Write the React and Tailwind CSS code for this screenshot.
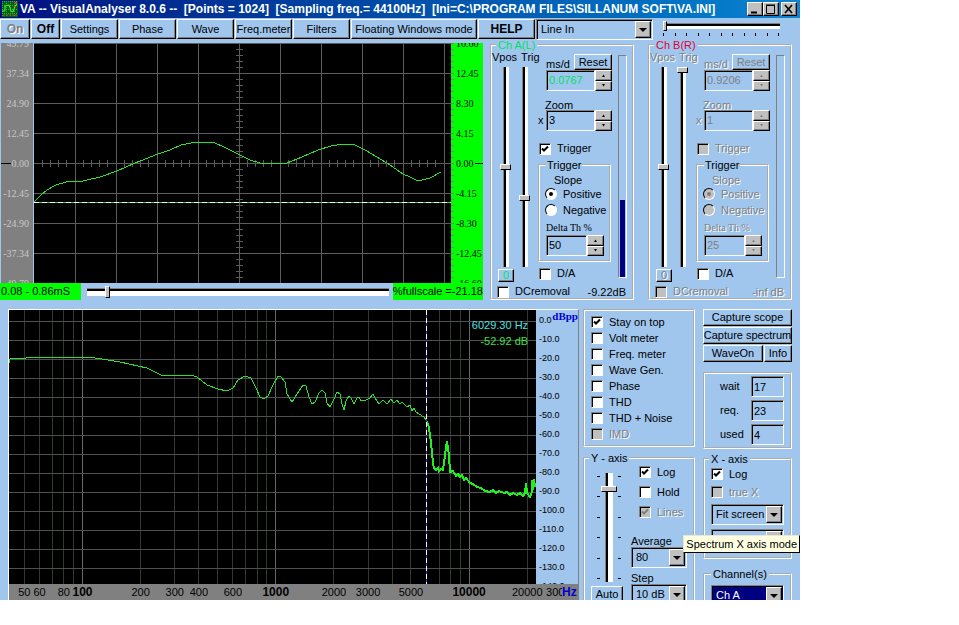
import React, { useState } from 'react';
import clsx from 'clsx';

const raised = 'border border-t-white border-l-white border-r-black border-b-black shadow-[inset_-1px_-1px_0_#808080]';
const sunken = 'border border-t-[#808080] border-l-[#808080] border-r-white border-b-white shadow-[inset_1px_1px_0_#000]';
const etched = 'min-w-0 border-2 [border-style:groove] border-white';
const dimmed = 'text-[#808080] [text-shadow:1px_1px_0_#fff]';

const Button = ({ className, children, ...props }) => (
  <button
    type="button"
    className={clsx('flex items-center justify-center whitespace-nowrap', raised, className)}
    {...props}
  >
    {children}
  </button>
);

const Check = ({ label, defaultChecked, disabled, className }) => (
  <label className={clsx('flex items-center gap-1.5 whitespace-nowrap', disabled && dimmed, className)}>
    <span className="grid size-3 shrink-0">
      <input
        type="checkbox"
        defaultChecked={defaultChecked}
        disabled={disabled}
        className={clsx('peer col-start-1 row-start-1 size-3 appearance-none', sunken, disabled ? 'bg-[#c0c0c0]' : 'bg-white')}
      />
      <svg viewBox="0 0 12 12" className="pointer-events-none invisible col-start-1 row-start-1 size-3 peer-checked:visible">
        <path d="M3 5.5 L5 7.5 L9 3.5" fill="none" stroke={disabled ? '#808080' : '#000'} strokeWidth="2" />
      </svg>
    </span>
    {label}
  </label>
);

const Radio = ({ label, name, defaultChecked, disabled }) => (
  <label className={clsx('flex h-4 items-center gap-1.5', disabled && dimmed)}>
    <span className="grid size-3 place-items-center">
      <input
        type="radio"
        name={name}
        defaultChecked={defaultChecked}
        disabled={disabled}
        className={clsx(
          'peer col-start-1 row-start-1 size-3 appearance-none rounded-full border border-t-black border-l-black border-r-white border-b-white',
          disabled ? 'bg-[#c0c0c0]' : 'bg-white'
        )}
      />
      <span className={clsx('invisible col-start-1 row-start-1 size-1 rounded-full peer-checked:visible', disabled ? 'bg-[#808080]' : 'bg-black')} />
    </span>
    {label}
  </label>
);

const Spinner = ({ label, value, disabled, className }) => (
  <div className="flex h-[21px]">
    <input
      aria-label={label}
      defaultValue={value}
      disabled={disabled}
      className={clsx('min-w-0 flex-1 bg-transparent pl-0.5', sunken, disabled ? 'text-[#808080]' : className)}
    />
    <div className="flex w-[17px] flex-col">
      {['up', 'down'].map((dir) => (
        <Button key={dir} aria-label={`${label} ${dir}`} disabled={disabled} className="flex-1 bg-[#c0c0c0]">
          <svg viewBox="0 0 5 3" className="h-[3px] w-[5px]">
            <path d={dir === 'up' ? 'M1 3 L2.5 0.5 L4 3Z' : 'M1 0 L2.5 2.5 L4 0Z'} fill={disabled ? '#808080' : '#000'} />
          </svg>
        </Button>
      ))}
    </div>
  </div>
);

const Select = ({ id, options, disabled, highlighted, className }) => (
  <div className={clsx('grid h-[21px]', className)}>
    <select
      id={id}
      aria-label={id}
      disabled={disabled}
      className={clsx(
        'col-start-1 row-start-1 min-w-0 appearance-none pl-1',
        sunken,
        highlighted ? 'bg-[#000080] text-white' : 'bg-transparent',
        disabled && 'text-[#808080]'
      )}
    >
      {options.map((o) => (
        <option key={o}>{o}</option>
      ))}
    </select>
    <span className={clsx('pointer-events-none col-start-1 row-start-1 my-0.5 mr-0.5 flex w-4 items-center justify-center justify-self-end bg-[#c0c0c0]', raised)}>
      <svg viewBox="0 0 8 4" className="h-1 w-2">
        <path d="M0 0 H8 L4 4Z" fill={disabled ? '#808080' : '#000'} />
      </svg>
    </span>
  </div>
);

const VSlider = ({ label, value, disabled }) => (
  <input
    type="range"
    aria-label={label}
    defaultValue={value}
    disabled={disabled}
    className="h-[200px] w-[11px] appearance-none bg-[linear-gradient(to_right,#808080_1px,#000_1px_3px,#fff_3px)] bg-[length:6px_100%] bg-center bg-no-repeat [writing-mode:vertical-lr] [&::-webkit-slider-thumb]:h-[6px] [&::-webkit-slider-thumb]:w-[11px] [&::-webkit-slider-thumb]:appearance-none [&::-webkit-slider-thumb]:border [&::-webkit-slider-thumb]:border-t-white [&::-webkit-slider-thumb]:border-r-black [&::-webkit-slider-thumb]:border-b-black [&::-webkit-slider-thumb]:border-l-white [&::-webkit-slider-thumb]:bg-[#c0c0c0]"
  />
);

const Channel = ({ id, title, titleClass, timeDiv, zoom, delta, trig, level, levelText, disabled }) => (
  <fieldset className={clsx('w-36 shrink-0', etched)}>
    <legend className={clsx('ml-1 px-0.5 leading-3', titleClass)}>{title}</legend>
    <div className="flex gap-1.5">
      <div className="flex w-10 shrink-0 flex-col">
        <div className={clsx('flex gap-1 leading-3', disabled && dimmed)}>
          <span>Vpos</span>
          <span>Trig</span>
        </div>
        <div className="mt-1 flex gap-2 pl-2">
          <VSlider label={`${id} vpos`} value={50} disabled={disabled} />
          <VSlider label={`${id} trig`} value={trig} disabled={disabled} />
        </div>
        <Button disabled={disabled} className={clsx('mt-0.5 ml-1.5 h-[13px] w-4', disabled ? dimmed : 'text-[#00e060]')}>0</Button>
      </div>

      <div className="flex w-[74px] shrink-0 flex-col pt-[3px]">
        <div className={clsx('flex h-4 items-end justify-between pl-2 leading-3', disabled && dimmed)}>
          <span>ms/d</span>
          <Button disabled={disabled} className="h-4 w-[38px] self-start">Reset</Button>
        </div>
        <div className="pl-2">
          <Spinner label={`${id} ms/d`} value={timeDiv} disabled={disabled} className="text-[#00e060]" />
        </div>
        <div className={clsx('mt-2 h-[11px] pl-[7px] leading-3', disabled && dimmed)}>Zoom</div>
        <div className="flex items-center">
          <span className={clsx('w-2', disabled && dimmed)}>x</span>
          <div className="min-w-0 flex-1">
            <Spinner label={`${id} zoom`} value={zoom} disabled={disabled} />
          </div>
        </div>
        <Check label="Trigger" defaultChecked={!disabled} disabled={disabled} className="mt-[11px] h-[13px] pl-px" />
        <fieldset className={clsx('mt-1 w-[73px] pb-1', etched)}>
          <legend className="ml-1.5 px-px leading-3">Trigger</legend>
          <div className={clsx('mt-[3px] pl-3.5 leading-3', disabled && dimmed)}>Slope</div>
          <div className="pl-[5px]">
            <Radio label="Positive" name={`${id}-slope`} defaultChecked disabled={disabled} />
            <Radio label="Negative" name={`${id}-slope`} disabled={disabled} />
          </div>
          <div className={clsx("mt-1 pl-1.5 font-['Liberation_Serif',serif] text-[10px] leading-3", disabled && dimmed)}>Delta Th %</div>
          <div className="mt-px w-16 pl-1.5">
            <Spinner label={`${id} delta`} value={delta} disabled={disabled} />
          </div>
        </fieldset>
        <Check label="D/A" className="mt-[5px] h-[13px] pl-px" />
      </div>

      <div className="mt-1 flex h-[223px] w-[9px] flex-col justify-end border border-t-[#808080] border-l-[#808080] border-r-white border-b-white px-px">
        <div className="bg-[#000080]" style={{ height: `${level}%` }} />
      </div>
    </div>
    <div className="flex items-center justify-between pt-[3px] pr-1.5 pl-[5px]">
      <Check label="DCremoval" disabled={disabled} className="h-[13px]" />
      <span className={clsx('leading-3', disabled && dimmed)}>{levelText}</span>
    </div>
  </fieldset>
);

// scope display, 417 x 240 units
const scopePath =
  'M0 159 L6 153 L13 147 L22 142 L32 139 L49 138 L66 134 L83 128 L101 120 L124 111 L136 107 L147 102 L157 100 L168 99 L181 100 L190 104 L206 112 L216 117 L226 120 L239 121 L253 120 L268 114 L284 107 L297 103 L309 101 L321 102 L331 107 L353 120 L369 131 L376 134 L384 138 L396 135 L407 129';

const ScopeLabels = ({ values, side }) => (
  <div className="flex h-60 flex-col justify-between overflow-hidden font-['Liberation_Serif',serif] text-[10px]">
    {values.map((v) => (
      <div key={v} className={clsx('flex h-0 items-center gap-px', side === 'left' ? 'justify-end pr-1' : 'pl-[5px]')}>
        {side === 'left' && v === '0.00' && <span className="h-px flex-1 bg-black" />}
        <span>{v}</span>
        {side === 'right' && v === '0.00' && <span className="h-px flex-1 bg-black" />}
      </div>
    ))}
  </div>
);

const Scope = () => (
  <div className="flex min-w-0 flex-1 flex-col pt-1">
    <div className="flex">
      <div className="ml-px w-8 bg-[#808080] text-[#c8c8c8]">
        <ScopeLabels side="left" values={['49.79', '37.34', '24.90', '12.45', '0.00', '-12.45', '-24.90', '-37.34', '-49.79']} />
      </div>
      <svg className="ml-px h-60 min-w-0 flex-1 bg-black" shapeRendering="crispEdges">
        {[1, 2, 3, 4, 5, 6, 7, 8, 9, 10].map((i) => (
          <line key={i} x1={`${(41 * i * 100) / 417}%`} x2={`${(41 * i * 100) / 417}%`} y1="0" y2="240" stroke="#5c5c5c" />
        ))}
        {[0, 1, 2, 3, 4, 5, 6, 7].map((i) => (
          <line key={i} x1="0" x2="100%" y1={30 * i + 0.5} y2={30 * i + 0.5} stroke="#5c5c5c" />
        ))}
        <svg viewBox="0 0 417 240" width="100%" height="240" preserveAspectRatio="none">
          {Array.from({ length: 50 }, (_, i) => (
            <line key={i} x1={8.2 * (i + 1)} x2={8.2 * (i + 1)} y1="117" y2="124" stroke="#5c5c5c" />
          ))}
          {Array.from({ length: 39 }, (_, i) => (
            <line key={i} x1="202" x2="209" y1={6 * (i + 1) + 0.5} y2={6 * (i + 1) + 0.5} stroke="#5c5c5c" />
          ))}
          <path d={scopePath} fill="none" stroke="#30e030" />
          <path d="M0 159.5 H417" stroke="#30e030" />
          <path d="M0 159.5 H417" stroke="#fff" strokeDasharray="5 3" />
        </svg>
      </svg>
      <div className="relative w-8 bg-[#00ff00]">
        <div className="absolute inset-y-0 left-0 w-[3px] bg-[repeating-linear-gradient(#808080_0_1px,transparent_1px_6px)]" />
        <ScopeLabels side="right" values={['16.60', '12.45', '8.30', '4.15', '0.00', '-4.15', '-8.30', '-12.45', '-16.60']} />
      </div>
    </div>
    <div className="flex h-[17px] items-center">
      <div className="h-full w-[81px] bg-[#00ff00] pl-px leading-4 whitespace-nowrap">0.08 - 0.86mS</div>
      <input
        type="range"
        aria-label="Scope position"
        defaultValue={6}
        className="mr-1 ml-1.5 h-3 min-w-0 flex-1 appearance-none bg-[linear-gradient(#808080_1px,#000_1px_3px,#fff_3px)] bg-[length:100%_8px] bg-center bg-no-repeat [&::-webkit-slider-thumb]:h-3 [&::-webkit-slider-thumb]:w-[5px] [&::-webkit-slider-thumb]:appearance-none [&::-webkit-slider-thumb]:border [&::-webkit-slider-thumb]:border-t-white [&::-webkit-slider-thumb]:border-r-black [&::-webkit-slider-thumb]:border-b-black [&::-webkit-slider-thumb]:border-l-white [&::-webkit-slider-thumb]:bg-[#c0c0c0]"
      />
      <div className="h-full shrink-0 bg-[#00ff00] leading-4 whitespace-nowrap">%fullscale =-21.18</div>
    </div>
  </div>
);

// spectrum display, 527 x 274 units, log frequency axis
const freqX = (hz) => `${((73.5 + 193.3 * Math.log10(hz / 100)) * 100) / 527}%`;

const gridFreqs = [50, 60, 70, 80, 90, 100, 200, 300, 400, 500, 600, 700, 800, 900, 1000, 2000, 3000, 4000, 5000, 6000, 7000, 8000, 9000, 10000, 20000];
const majors = [100, 1000, 10000];
const freqLabels = [50, 60, 80, 100, 200, 300, 400, 600, 1000, 2000, 3000, 5000, 10000, 20000, 30000];

const spectrumLow =
  'M0 53 L1 49 L17 48 L46 47 L69 47 L86 48 L99 50 L111 52 L138 58 L152 65 L182 65 L188 67 L198 75 L209 79 L218 81 L224 78 L229 70 L236 66 L242 68 L247 78 L251 87 L255 89 L259 86 L264 75 L269 66 L272 67 L276 72 L278 84 L283 92 L288 84 L294 75 L297 76 L300 87 L303 94 L306 92 L310 83 L313 80 L316 83 L318 93 L321 97 L325 89 L328 82 L331 84 L333 94 L335 100 L337 91 L340 86 L342 88 L345 94 L348 88 L350 87 L352 91 L357 90 L361 88 L364 84 L366 88 L370 94 L374 90 L378 94 L382 89 L385 93 L388 90 L391 94 L393 92 L395 94 L398 97 L401 95 L403 101 L405 98 L407 102 L410 104 L415 107 L418 111';
const spectrumHigh =
  'M418 111 L420 118 L422 133 L424 153 L425 158 L427 160 L429 158 L430 161 L432 159 L434 160 L436 145 L438 131 L440 145 L441 162 L444 161 L447 166 L449 164 L451 167 L453 165 L455 170 L457 168 L461 173 L464 174 L468 177 L472 178 L476 181 L481 182 L484 180 L487 183 L490 181 L495 183 L498 182 L501 185 L504 183 L508 185 L511 183 L514 186 L516 183 L517 173 L518 183 L521 187 L523 182 L523 170 L524 180 L525 169 L526 177';

const Spectrum = () => (
  <div className="flex min-w-0 flex-1 flex-col border-t border-r border-l border-t-white border-r-[#808080] border-l-white">
    <div className="flex h-[274px]">
      <svg className="h-full min-w-0 flex-1 bg-black">
        <g shapeRendering="crispEdges">
          {gridFreqs.map((f) => (
            <line key={f} x1={freqX(f)} x2={freqX(f)} y1="0" y2="274" stroke={majors.includes(f) ? '#686868' : '#303830'} />
          ))}
          {Array.from({ length: 14 }, (_, i) => (
            <line key={i} x1="0" x2="100%" y1={11.5 + 19 * i} y2={11.5 + 19 * i} stroke="#505050" />
          ))}
          <svg viewBox="0 0 527 274" width="100%" height="274" preserveAspectRatio="none">
            <path d={spectrumLow} fill="none" stroke="#30e030" />
            <path d={spectrumHigh} fill="none" stroke="#20f020" strokeWidth="2" />
            <path d="M417.5 0 V274" stroke="#5020c0" />
            <path d="M417.5 0 V274" stroke="#fff" strokeDasharray="5 3" />
          </svg>
        </g>
        <text x="98.5%" y="19" textAnchor="end" fill="#50e0e0">6029.30 Hz</text>
        <text x="98.5%" y="35" textAnchor="end" fill="#40e040">-52.92 dB</text>
      </svg>
      <div className="flex w-[42px] justify-between overflow-hidden pl-[3px]">
        <ul className="text-[9px]">
          {Array.from({ length: 15 }, (_, i) => (
            <li key={i} className="h-[19px] leading-5">{(-10 * i).toFixed(1).replace('-0.0', '0.0')}</li>
          ))}
        </ul>
        <span className="-ml-4 h-3 font-['Liberation_Serif',serif] leading-3 font-bold text-[#0000d0]">dBpp</span>
      </div>
    </div>
    <div className="flex h-4 bg-[#808080]">
      <svg className="h-4 min-w-0 flex-1 overflow-visible">
        {freqLabels.map((f) => (
          <text key={f} x={freqX(f)} y="12" textAnchor="middle" className={majors.includes(f) ? 'text-xs font-bold' : ''}>{f}</text>
        ))}
      </svg>
      <div className="w-[42px] pl-[26px]">
        <div className="relative bg-[#808080] text-xs leading-4 font-bold text-[#0000d0]">Hz</div>
      </div>
    </div>
  </div>
);

const Dashes = () => (
  <div className="flex h-[103px] w-[3px] flex-col justify-between">
    {[0, 1, 2, 3, 4, 5].map((i) => (
      <span key={i} className="h-px bg-black" />
    ))}
  </div>
);

const toolbar = [
  { name: 'Settings', width: 'w-[57px]' },
  { name: 'Phase', width: 'w-[57px]' },
  { name: 'Wave', width: 'w-[57px]' },
  { name: 'Freq.meter', width: 'w-[57px]' },
  { name: 'Filters', width: 'w-[57px]' },
  { name: 'Floating Windows mode', width: 'w-[126px]' }
];

const options = [
  { label: 'Stay on top', checked: true },
  { label: 'Volt meter' },
  { label: 'Freq. meter' },
  { label: 'Wave Gen.' },
  { label: 'Phase' },
  { label: 'THD' },
  { label: 'THD + Noise' },
  { label: 'IMD', disabled: true }
];

const TitleBar = () => (
  <header className="flex h-[18px] items-center bg-linear-to-r from-[#000c80] to-[#1084d0] pr-[3px] pl-0.5 text-white">
    <svg viewBox="0 0 16 16" className="size-4 shrink-0 bg-[#006010]">
      <path d="M0 0.5H16 M0 4.5H16 M0 8.5H16 M0 12.5H16 M0.5 0V16 M4.5 0V16 M8.5 0V16 M12.5 0V16" stroke="#30b040" strokeWidth="1" strokeDasharray="1 1" />
      <path d="M0 10 L3 10 L3 5 L7 4 L9 10 L11 11 L13 5 L15 3" fill="none" stroke="#40ff30" />
      <path d="M13 1H15V3H13Z M12 5H14V6H12Z" fill="#ff3020" />
      <path d="M1 14H15" stroke="#a06020" strokeDasharray="2 1" />
    </svg>
    <h1 className="min-w-0 flex-1 overflow-hidden pl-0.5 text-xs font-bold whitespace-pre">
      {'VA -- VisualAnalyser 8.0.6 --  [Points = 1024]  [Sampling freq.= 44100Hz]  [Ini=C:\\PROGRAM FILES\\SILLANUM SOFT\\VA.INI]'}
    </h1>
    <div className="flex text-black">
      <Button aria-label="Minimize" className="h-3.5 w-4 bg-[#c0c0c0]">
        <svg viewBox="0 0 10 10" className="size-2.5"><path d="M1 8.5H7" stroke="#000" strokeWidth="2" /></svg>
      </Button>
      <Button aria-label="Maximize" className="h-3.5 w-4 bg-[#c0c0c0]">
        <svg viewBox="0 0 10 10" className="size-2.5" fill="none" stroke="#000"><path d="M0.5 1.5H8.5V9.5H0.5Z M0 1H9" /></svg>
      </Button>
      <Button aria-label="Close" className="ml-0.5 h-3.5 w-4 bg-[#c0c0c0]">
        <svg viewBox="0 0 10 10" className="size-2.5"><path d="M1 1L8 9 M8 1L1 9" stroke="#000" strokeWidth="1.6" /></svg>
      </Button>
    </div>
  </header>
);

const App = () => {
  const [running, setRunning] = useState(true);

  return (
    <div className="min-h-screen bg-white pr-[159px] font-['Liberation_Sans',Arial,sans-serif] text-[11px] text-black">
      <main className="min-w-[780px] bg-[#a0c6ee]">
        <TitleBar />

        {/* Toolbar */}
        <nav className="flex h-[21px] items-start gap-px pt-px">
          <Button disabled={running} onClick={() => setRunning(true)} className={clsx('h-5 w-[30px] text-xs font-bold', running && dimmed)}>On</Button>
          <Button onClick={() => setRunning(false)} className="h-5 w-[29px] text-xs font-bold">Off</Button>
          {toolbar.map((b) => (
            <Button key={b.name} className={clsx('h-5', b.width)}>{b.name}</Button>
          ))}
          <Button className="h-5 w-[57px] text-xs font-bold">HELP</Button>
          <Select id="input-source" options={['Line In', 'Microphone']} className="min-w-0 flex-1" />
          <div className="ml-[9px] w-[137px] pt-0.5">
            <input
              type="range"
              aria-label="Input level"
              defaultValue={0}
              className="block h-2.5 w-[117px] appearance-none bg-[linear-gradient(#808080_1px,#000_1px_3px,#fff_3px)] bg-[length:100%_6px] bg-center bg-no-repeat [&::-webkit-slider-thumb]:h-2.5 [&::-webkit-slider-thumb]:w-1 [&::-webkit-slider-thumb]:appearance-none [&::-webkit-slider-thumb]:border [&::-webkit-slider-thumb]:border-t-white [&::-webkit-slider-thumb]:border-r-black [&::-webkit-slider-thumb]:border-b-black [&::-webkit-slider-thumb]:border-l-white [&::-webkit-slider-thumb]:bg-[#c0c0c0]"
            />
            <div className="mt-0.5 flex w-[116px] justify-between">
              {Array.from({ length: 11 }, (_, i) => (
                <span key={i} className="h-[3px] w-px bg-black" />
              ))}
            </div>
          </div>
        </nav>

        {/* Scope and channels */}
        <div className="flex pr-2">
          <Scope />
          <div className="ml-[7px] flex gap-3.5">
            <Channel
              id="A" title="Ch A(L)" titleClass="text-[#00e060]"
              timeDiv="0.0767" zoom="3" delta="50" trig={66} level={35} levelText="-9.22dB"
            />
            <Channel
              id="B" title="Ch B(R)" titleClass="text-[#e00030]"
              timeDiv="0.9206" zoom="1" delta="25" trig={0} level={0} levelText="-inf dB" disabled
            />
          </div>
        </div>

        {/* Spectrum and its settings */}
        <div className="mt-[9px] flex h-[291px] overflow-hidden pr-2 pl-2">
          <Spectrum />

          <div className="ml-1 w-28 shrink-0">
            <div className={clsx('py-[3px] pl-1.5', etched)}>
              {options.map((o) => (
                <Check key={o.label} label={o.label} defaultChecked={o.checked} disabled={o.disabled} className="h-4" />
              ))}
            </div>
            <fieldset className={clsx('mt-[5px] h-40', etched)}>
              <legend className="ml-1 px-0.5 leading-3">Y - axis</legend>
              <div className="flex">
                <div className="flex w-[46px] flex-col pl-1.5">
                  <div className="mt-[9px] flex h-[109px] items-center gap-px pl-1.5">
                    <Dashes />
                    <input
                      type="range"
                      aria-label="Y offset"
                      defaultValue={13}
                      className="h-[109px] w-4 appearance-none bg-[linear-gradient(to_right,#808080_1px,#000_1px_3px,#fff_3px)] bg-[length:8px_100%] bg-center bg-no-repeat [writing-mode:vertical-lr] [&::-webkit-slider-thumb]:h-1.5 [&::-webkit-slider-thumb]:w-4 [&::-webkit-slider-thumb]:appearance-none [&::-webkit-slider-thumb]:border [&::-webkit-slider-thumb]:border-t-white [&::-webkit-slider-thumb]:border-r-black [&::-webkit-slider-thumb]:border-b-black [&::-webkit-slider-thumb]:border-l-white [&::-webkit-slider-thumb]:bg-[#c0c0c0]"
                    />
                    <Dashes />
                  </div>
                  <Button className="mt-1 h-[17px] w-8">Auto</Button>
                </div>
                <div className="flex flex-1 flex-col">
                  <div className="flex flex-col gap-2 pt-0.5 pl-2">
                    <Check label="Log" defaultChecked className="h-3" />
                    <Check label="Hold" className="h-3" />
                    <Check label="Lines" defaultChecked disabled className="h-3" />
                  </div>
                  <label htmlFor="average" className="mt-[17px] leading-3">Average</label>
                  <Select id="average" options={['80', '40', '20']} className="w-14" />
                  <label htmlFor="step" className="mt-1 leading-3">Step</label>
                  <Select id="step" options={['10 dB', '20 dB']} className="w-14" />
                </div>
              </div>
            </fieldset>
          </div>

          <div className="ml-2 w-[89px] shrink-0">
            <div className="flex flex-col gap-px">
              <Button className="h-[17px]">Capture scope</Button>
              <Button className="h-[17px]">Capture spectrum</Button>
              <div className="flex gap-px">
                <Button className="h-[17px] flex-1">WaveOn</Button>
                <Button className="h-[17px] w-7">Info</Button>
              </div>
            </div>
            <div className={clsx('mt-2.5 flex flex-col gap-[3px] py-0.5 pr-1.5 pl-[15px]', etched)}>
              {[['wait', '17'], ['req.', '23'], ['used', '4']].map(([name, value]) => (
                <label key={name} className="flex items-center justify-between">
                  {name}
                  <input defaultValue={value} className={clsx('h-[21px] w-[33px] bg-transparent pl-0.5', sunken)} />
                </label>
              ))}
            </div>
            <fieldset className={clsx('relative mt-1 pb-[7px] pl-1.5', etched)}>
              <legend className="-ml-0.5 px-0.5 leading-3">X - axis</legend>
              <Check label="Log" defaultChecked className="mt-[3px] h-3" />
              <Check label="true X" disabled className="mt-1.5 h-3" />
              <Select id="x-mode" options={['Fit screen', 'Scroll']} className="mt-1.5 w-[73px]" />
              <Select id="x-zoom" options={['1 X']} disabled className="mt-1 w-[73px]" />
              <div role="tooltip" className="absolute top-[70px] -right-2.5 border border-t-[#e8e8d0] border-r-black border-b-black border-l-[#e8e8d0] bg-[#ffffe1] px-0.5 leading-4 whitespace-nowrap">
                Spectrum X axis mode
              </div>
            </fieldset>
            <fieldset className={clsx('mt-[9px] h-16 pt-[5px] pl-1.5', etched)}>
              <legend className="px-0.5 leading-3">Channel(s)</legend>
              <Select id="channels" options={['Ch A', 'Ch B']} highlighted className="w-[73px]" />
            </fieldset>
          </div>
        </div>
      </main>
    </div>
  );
};

export default App;
